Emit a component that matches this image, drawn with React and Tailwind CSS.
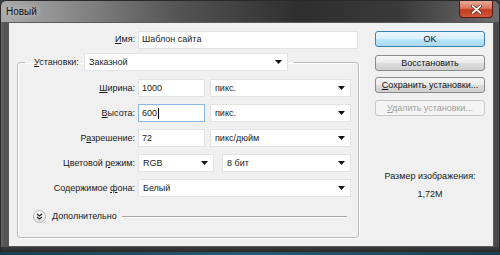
import React from "react";

function Mn({ children }) {
  return <span className="underline underline-offset-[1px]">{children}</span>;
}

function Arrow() {
  return (
    <svg width="7" height="4" viewBox="0 0 7 4" className="shrink-0">
      <path d="M0 0 H7 L3.5 4 Z" fill="#111" />
    </svg>
  );
}

function Select({ w, value }) {
  return (
    <div className={`${w} h-[18px] bg-white border border-[#e3e3e3] flex items-center pl-[4px] pr-[5px] shrink-0`}>
      <span className="flex-1 text-[#222]">{value}</span>
      <Arrow />
    </div>
  );
}

function Input({ w, value, focus }) {
  return (
    <div
      className={`${w} h-[18px] bg-white border ${focus ? "border-[#8cb8e6]" : "border-[#e3e3e3]"} flex items-center pl-[3px] shrink-0`}
    >
      <span className="text-[#222]">{value}</span>
      {focus && <span className="w-px h-[11px] bg-black ml-px" />}
    </div>
  );
}

function Row({ label, children }) {
  return (
    <div className="flex items-center h-[18px]">
      <div className="w-[113px] text-right text-[#1a1a1a] pr-[3px] shrink-0">{label}</div>
      <div className="flex items-center">{children}</div>
    </div>
  );
}

function Btn({ children, primary, disabled }) {
  const base = "w-[110px] h-[16px] rounded-[3px] border flex items-center justify-center whitespace-nowrap";
  if (primary)
    return (
      <div className={`${base} border-[#3c7fb1] bg-[linear-gradient(#eaf6fd_0%,#d9f0fc_50%,#bee6fd_51%,#a7d9f5_100%)] text-[#111]`}>
        {children}
      </div>
    );
  if (disabled)
    return (
      <div className={`${base} border-[#c4c8cb] bg-[#f4f4f4] text-[#a0a0a0]`}>{children}</div>
    );
  return (
    <div className={`${base} border-[#8a8a8a] bg-[linear-gradient(#f6f6f6_0%,#ebebeb_50%,#dddddd_51%,#cfcfcf_100%)] text-[#111]`}>
      {children}
    </div>
  );
}

export default function App() {
  return (
    <div className="w-[500px] h-[255px] flex flex-col bg-[#3e3e3e] font-['Liberation_Sans',Arial,sans-serif] text-[9px] leading-none overflow-hidden">
      {/* Title bar */}
      <div className="h-[22px] flex items-start bg-[linear-gradient(90deg,#a9a9a9_0%,#8f8f8f_12%,#555_35%,#2e2e2e_60%,#3a3a3a_80%,#6e6e6e_100%)] border-t border-x border-[#2a2a2a] rounded-t-[6px]">
        <span className="ml-[5px] mt-[6px] text-[10px] text-[#111] [text-shadow:0_0_6px_rgba(255,255,255,0.8)]">
          Новый
        </span>
        <div className="ml-auto mr-[6px] w-[34px] h-[17px] rounded-b-[4px] border border-t-0 border-[#5a1a10] bg-[linear-gradient(#eba896_0%,#d9765e_45%,#c0391f_55%,#d25a3a_100%)] flex items-center justify-center">
          <svg width="11" height="9" viewBox="0 0 11 9">
            <path d="M1.5 1 L9.5 8 M9.5 1 L1.5 8" stroke="#5a1a10" strokeWidth="3.2" strokeLinecap="round" />
            <path d="M1.5 1 L9.5 8 M9.5 1 L1.5 8" stroke="#fff" strokeWidth="1.8" strokeLinecap="round" />
          </svg>
        </div>
      </div>

      {/* Body */}
      <div className="flex-1 flex bg-[linear-gradient(90deg,#6a6a6a,#555_3px,#4a4a4a)] pl-[7px] pr-[7px] border-x border-[#2a2a2a]">
        <div className="flex-1 bg-[#f0f0f0] border border-[#5a5a5a] flex pl-[8px] pr-[8px]">
          {/* Left column */}
          <div className="w-[344px] flex flex-col">
            <div className="flex items-center h-[17px] mt-[8px]">
              <div className="w-[121px] text-right pr-[3px] text-[#1a1a1a]">
                <Mn>И</Mn>мя:
              </div>
              <Input w="w-[220px]" value="Шаблон сайта" />
            </div>

            <fieldset className="mt-[5px] w-[341px] border border-[#bcbcbc] rounded-[3px] px-[7px] pb-[14px] shadow-[inset_1px_1px_0_#fff,1px_1px_0_#fff]">
              <legend className="pl-[9px] pr-[6px]">
                <div className="flex items-center">
                  <span className="w-[50px] text-[#1a1a1a]">
                    <Mn>У</Mn>становки:
                  </span>
                  <Select w="w-[204px]" value="Заказной" />
                </div>
              </legend>

              <div className="flex flex-col gap-[7px] mt-[8px]">
                <Row label={<><Mn>Ш</Mn>ирина:</>}>
                  <Input w="w-[67px]" value="1000" />
                  <div className="w-[5px]" />
                  <Select w="w-[141px]" value="пикс." />
                </Row>
                <Row label={<><Mn>В</Mn>ысота:</>}>
                  <Input w="w-[67px]" value="600" focus />
                  <div className="w-[5px]" />
                  <Select w="w-[141px]" value="пикс." />
                </Row>
                <Row label={<>Р<Mn>а</Mn>зрешение:</>}>
                  <Input w="w-[67px]" value="72" />
                  <div className="w-[5px]" />
                  <Select w="w-[141px]" value="пикс/дюйм" />
                </Row>
                <Row label={<>Цветовой <Mn>р</Mn>ежим:</>}>
                  <Select w="w-[76px]" value="RGB" />
                  <div className="w-[8px]" />
                  <Select w="w-[129px]" value="8 бит" />
                </Row>
                <Row label={<>Содержимое <Mn>ф</Mn>она:</>}>
                  <Select w="w-[213px]" value="Белый" />
                </Row>
              </div>

              <div className="flex items-center h-[14px] mt-[12px] pl-[8px] pr-[4px]">
                <div className="w-[13px] h-[13px] rounded-full border border-[#b5b5b5] bg-[linear-gradient(#ffffff,#e2e2e2)] flex items-center justify-center">
                  <svg width="7" height="7" viewBox="0 0 7 7">
                    <path d="M1 1 L3.5 3 L6 1 M1 4 L3.5 6 L6 4" stroke="#222" strokeWidth="1.2" fill="none" />
                  </svg>
                </div>
                <span className="ml-[6px] text-[#1a1a1a]">Дополнительно</span>
                <div className="flex-1 h-px bg-[#a8a8a8] ml-[5px] shadow-[0_1px_0_#fff]" />
              </div>
            </fieldset>
          </div>

          {/* Right column */}
          <div className="ml-[14px] w-[110px] flex flex-col">
            <div className="mt-[8px]">
              <Btn primary>OK</Btn>
            </div>
            <div className="mt-[8px]">
              <Btn>Восстановить</Btn>
            </div>
            <div className="mt-[6px]">
              <Btn>
                <span>
                  <Mn>С</Mn>охранить установки...
                </span>
              </Btn>
            </div>
            <div className="mt-[7px]">
              <Btn disabled>
                <span>
                  <Mn>У</Mn>далить установки...
                </span>
              </Btn>
            </div>
            <div className="mt-[56px] text-center text-[#1a1a1a]">Размер изображения:</div>
            <div className="mt-[9px] text-center text-[#1a1a1a]">1,72M</div>
          </div>
        </div>
      </div>

      {/* Bottom frame */}
      <div className="h-[8px] flex flex-col">
        <div className="h-[5px] bg-[linear-gradient(#3a3a3a,#2a2a2a)] border-x border-[#2a2a2a]" />
        <div className="h-[3px] bg-[linear-gradient(90deg,#1d3c4c,#2a5a70,#1d3c4c)]" />
      </div>
    </div>
  );
}
